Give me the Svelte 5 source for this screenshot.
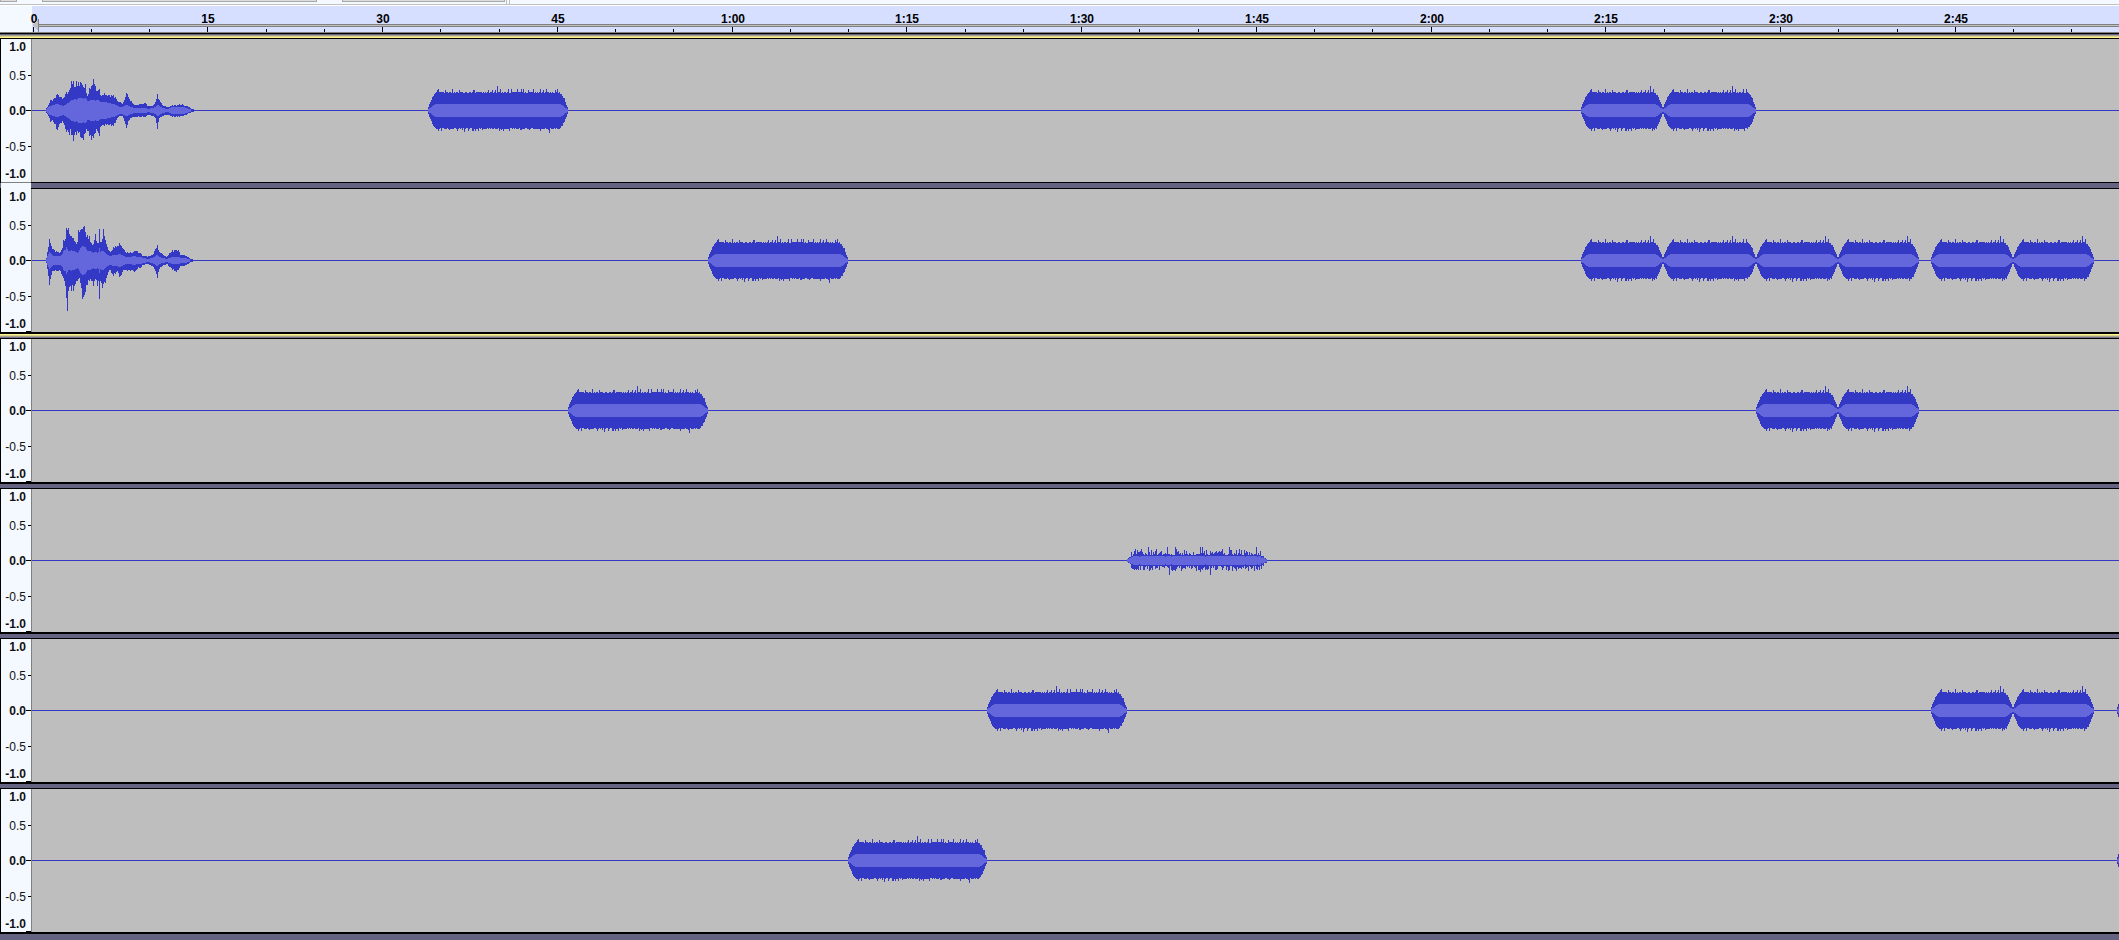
<script>

	// Timeline scale, in pixels per second:
	const ZOOM = 11.65;
	const MIDDLE = 71;

	// Speech envelopes: [x, height above, depth below, rms]
	const speechLeft = [
		[13, 0, 0, 0], [14, 2, 2, 1], [16, 5, 5, 3], [18, 10, 11, 4], [21, 11, 11, 5], [25, 16, 19, 6], [28, 13, 12, 5],
		[31, 12, 12, 4], [34, 18, 21, 6], [37, 20, 24, 8], [38, 22, 18, 9], [39, 29, 24, 10], [41, 29, 30, 10], [42, 23, 24, 11],
		[44, 29, 24, 10], [46, 28, 22, 12], [49, 27, 27, 12], [51, 23, 29, 11], [53, 26, 22, 12], [55, 14, 20, 9],
		[57, 22, 25, 9], [59, 24, 29, 10], [61, 31, 27, 10], [63, 24, 22, 9], [65, 19, 20, 10], [67, 21, 25, 9],
		[68, 15, 16, 8], [72, 17, 15, 8], [76, 15, 14, 7], [81, 15, 15, 6], [83, 13, 12, 5], [85, 9, 7, 4], [88, 8, 5, 3],
		[90, 6, 5, 3], [92, 10, 10, 4], [94, 17, 17, 5], [96, 13, 10, 4], [99, 9, 7, 3], [102, 5, 6, 2], [108, 6, 6, 2],
		[113, 7, 6, 2], [116, 4, 4, 1], [120, 4, 5, 2], [123, 8, 7, 3], [125, 16, 18, 5], [127, 10, 7, 4], [130, 5, 5, 2],
		[135, 3, 4, 1], [140, 5, 6, 3], [145, 5, 6, 3], [150, 6, 5, 3], [154, 4, 4, 2], [157, 3, 2, 1], [160, 1, 1, 0], [164, 0, 0, 0]
	];
	const speechRight = [
		[13, 0, 0, 0], [14, 2, 2, 1], [15, 8, 8, 4], [17, 21, 24, 8], [19, 14, 14, 6], [21, 11, 10, 4], [25, 8, 10, 4],
		[28, 8, 10, 4], [30, 12, 15, 6], [31, 20, 17, 9], [33, 21, 25, 10], [34, 32, 37, 13], [35, 30, 50, 11], [36, 32, 30, 9],
		[38, 24, 25, 9], [39, 24, 30, 10], [40, 22, 24, 9], [41, 22, 30, 9], [43, 18, 23, 8], [45, 18, 20, 7], [46, 30, 18, 8],
		[47, 28, 17, 10], [49, 31, 27, 13], [50, 31, 38, 14], [52, 34, 34, 13], [53, 28, 31, 13], [55, 25, 24, 9],
		[57, 24, 20, 9], [59, 17, 20, 8], [61, 16, 25, 7], [63, 26, 18, 8], [65, 17, 25, 7], [66, 17, 20, 8], [67, 31, 38, 12],
		[68, 18, 20, 8], [70, 21, 27, 9], [71, 31, 23, 9], [73, 20, 22, 7], [75, 13, 14, 5], [77, 9, 9, 4], [79, 9, 12, 4],
		[81, 13, 15, 5], [85, 14, 10, 5], [87, 17, 16, 6], [89, 14, 14, 5], [91, 11, 9, 4], [94, 7, 9, 3], [98, 8, 10, 3],
		[102, 9, 11, 4], [105, 9, 8, 3], [108, 7, 7, 3], [111, 4, 4, 2], [116, 4, 3, 1], [120, 5, 5, 2], [123, 11, 10, 4],
		[125, 15, 17, 5], [127, 8, 8, 3], [130, 6, 5, 2], [134, 3, 3, 1], [137, 7, 6, 2], [140, 10, 9, 3], [144, 10, 11, 3],
		[146, 10, 9, 3], [148, 5, 5, 2], [152, 5, 5, 2], [156, 3, 3, 1], [158, 1, 1, 0], [164, 0, 0, 0]
	];

	// Clips are [start, end] in seconds:
	const groups = [
		{ selected: true, channels: [
			{ speech: speechLeft, clips: [[34, 46], [133, 140], [140, 148]] },
			{ speech: speechRight, clips: [[58, 70], [133, 140], [140, 148], [148, 155], [155, 162], [163, 170], [170, 177]] }
		]},
		{ channels: [{ clips: [[46, 58], [148, 155], [155, 162]] }] },
		{ channels: [{ quiet: true, clips: [[94, 106]] }] },
		{ channels: [{ clips: [[82, 94], [163, 170], [170, 177], [179, 186]] }] },
		{ channels: [{ clips: [[70, 82], [179, 186]] }] }
	];

	const levels = ["1.0", "0.5", "0.0", "-0.5", "-1.0"];
	const seconds = Array.from({ length: 36 }, (_, i) => i * 5);

	function timeLabel(time) {
		if(time < 60) return String(time);
		return Math.floor(time / 60) + ":" + String(time % 60).padStart(2, "0");
	}

	// Repeatable noise between 0 and 1:
	function noise(n) {
		const value = Math.sin(n * 127.1 + 11.7) * 43758.5453;
		return value - Math.floor(value);
	}

	function column(x, up, down) {
		return `M${x} ${MIDDLE - up}h1v${up + down + 1}h-1z`;
	}

	function speechPaths(points) {
		let peak = "", rms = "";
		for(let i = 0; i < points.length - 1; i++) {
			const a = points[i], b = points[i + 1];
			for(let x = a[0]; x < b[0]; x++) {
				const t = (x - a[0]) / (b[0] - a[0]);
				const mix = k => a[k] + (b[k] - a[k]) * t;
				const jitter = t > 0 ? 0.84 + noise(x) * 0.2 : 1;
				peak += column(x, Math.round(mix(1) * jitter), Math.round(mix(2) * jitter));
				if(mix(3) >= 0.5) rms += column(x, Math.round(mix(3)), Math.round(mix(3)));
			}
		}
		return { peak, rms };
	}

	function clipPaths([start, end], quiet) {
		let peak = "", rms = "";
		const from = Math.round(start * ZOOM);
		const width = Math.round(end * ZOOM) - from;
		for(let i = 0; i < width; i++) {
			const edge = Math.min(i, width - 1 - i);
			const fade = Math.min(1, (edge + 1) / 10);
			const slope = Math.sin(fade * Math.PI / 2);
			let up, down, inner;
			if(quiet) {
				up = 5 + Math.pow(noise(i), 2) * 6;
				down = 5 + Math.pow(noise(i + 500), 2) * 6;
				inner = noise(i + 900) > 0.93 ? 3 : 4;
				if(i % 27 === 21 || i === 73 || i === 40) up = 13;
				if(i === 42 || i === 83) down = 14;
			} else {
				up = 17 + Math.round(noise(i) * 1.4) + (noise(i + 300) > 0.86 ? 3 : 0);
				down = 17 + Math.round(noise(i + 500) * 1.6) + (noise(i + 800) > 0.86 ? 2 : 0);
				inner = 6;
				if(i === 69) up = 24;
				if(i === 36) down = 21;
				if(i === 121) down = 22;
			}
			const innerSlope = Math.min(1, (edge + 1) / 8);
			peak += column(from + i, Math.max(1, Math.round(up * slope)), Math.max(1, Math.round(down * slope)));
			rms += column(from + i, Math.round(inner * innerSlope), Math.round(inner * innerSlope));
		}
		return { peak, rms };
	}

	function waveforms(channel) {
		const waves = channel.clips.map(clip => clipPaths(clip, channel.quiet));
		return channel.speech ? [speechPaths(channel.speech), ...waves] : waves;
	}

</script>

<!-- #################################################################################################### -->

<main>

	<!-- Bottom Edge of the Toolbars -->
	<div class="toolbars">
		<span class="tool first"></span>
		<span class="tool second"></span>
		<span class="tool third"></span>
		<span class="grip"></span>
	</div>

	<!-- Time Ruler -->
	<svg class="ruler" shape-rendering="crispEdges">
		<rect class="corner" width="32" height="26" />
		<rect class="rail" x="34" y="18" width="100%" height="3" />
		<rect class="groove" x="34" y="19" width="100%" height="1" />
		{#each seconds as time}
			{@const x = 33 + Math.floor(time * ZOOM)}
			{#if time % 15 === 0}
				<rect {x} y="21" width="1" height="5" />
				<text x={x + 1} y="17">{timeLabel(time)}</text>
			{:else}
				<rect {x} y="23" width="1" height="3" />
			{/if}
		{/each}
		<path class="playhead" d="M38 13v12l-5-6z" />
		<path class="playhead-edge" d="M38 13h1v13h-1z" />
	</svg>
	<div class="shadow"></div>

	<!-- Tracks -->
	{#each groups as group}
		<section class:selected={group.selected}>
			{#each group.channels as channel}
				<div class="track">
					<ul>
						{#each levels as level, i}
							<li class:bold={i % 2 === 0}>
								<span>{level}</span>
								<i></i>
							</li>
						{/each}
					</ul>
					<svg class="wave" shape-rendering="crispEdges">
						<rect class="peak" y={MIDDLE} width="100%" height="1" />
						{#each waveforms(channel) as wave}
							<path class="peak" d={wave.peak} />
							<path class="rms" d={wave.rms} />
						{/each}
					</svg>
				</div>
			{/each}
		</section>
	{/each}
</main>

<!-- #################################################################################################### -->

<style>

	:global(body) {
		margin: 0;
		background-color: #646482;
	}

	main {
		min-height: 100vh;
		overflow: hidden;
		font: 12px/12px "Liberation Sans", Arial, sans-serif;
		color: #111;
		background-color: #646482;
	}

	.toolbars {
		display: flex;
		box-sizing: border-box;
		height: 6px;
		padding-bottom: 2px;
		background: linear-gradient(#f4f8ff 4px, #c0c0c0 4px, #c0c0c0 5px, #fff 5px);
	}

	.tool {
		box-sizing: border-box;
		height: 2px;
		border: 1px solid #a8a8a8;
		border-top: 0;
		background-color: #ddd;
	}

	.first {
		width: 17px;
		margin-right: 25px;
	}

	.second {
		width: 275px;
		margin-right: 25px;
	}

	.third {
		width: 163px;
		margin-right: 1px;
	}

	.grip {
		width: 2px;
		height: 4px;
		border: 1px solid #c0c0c0;
		border-width: 0 1px;
	}

	svg {
		display: block;
		width: 100%;
	}

	.ruler {
		height: 26px;
		background-color: #d6dfff;
	}

	.ruler text {
		font-weight: bold;
		text-anchor: middle;
	}

	.corner {
		fill: #f4f8ff;
	}

	.rail {
		fill: #808080;
	}

	.groove,
	.playhead {
		fill: #c0c0c0;
	}

	.playhead-edge {
		fill: #808080;
	}

	.shadow {
		height: 3px;
		background: linear-gradient(#808080 1px, #000 1px, #000 2px, #646482 2px);
	}

	section {
		padding-bottom: 4px;
	}

	section.selected {
		padding: 3px 0 4px;
		background:
			linear-gradient(#a8a48c 1px, #d8d28c 1px, #d8d28c 2px, #fff48c 2px) top / 100% 3px no-repeat,
			linear-gradient(#fff48c 1px, #d8d28c 1px, #d8d28c 2px, #a8a48c 2px, #a8a48c 3px, #77748a 3px) bottom / 100% 4px no-repeat;
	}

	.track {
		display: grid;
		grid-template-columns: 32px 1fr;
		height: 143px;
		border-top: 1px solid #000;
		border-bottom: 2px solid #000;
		background-color: #bebebe;
	}

	.selected .track:first-child {
		margin-bottom: 5px;
		border-bottom-width: 1px;
		box-shadow: 0 5px #646482;
	}

	ul {
		display: grid;
		grid-template-rows: 16px 41px 29px 43px 11px;
		position: relative;
		box-sizing: border-box;
		height: 143px;
		margin: 0;
		padding: 0;
		list-style: none;
		border-left: 1px solid #000;
		border-right: 1px solid #808080;
		background-color: #f4f8ff;
	}

	/* The two channels of a stereo track share one scale column */
	.selected .track:first-child ul::after {
		content: "";
		position: absolute;
		top: 143px;
		left: 0;
		width: 30px;
		height: 6px;
		border-top: 1px solid #808080;
		background-color: #f4f8ff;
	}

	li {
		display: flex;
		align-items: center;
		justify-content: flex-end;
	}

	li span {
		margin-right: 2px;
	}

	li i {
		width: 3px;
		height: 1px;
		background-color: #000;
	}

	.bold {
		font-weight: bold;
	}

	.bold span {
		margin-right: 0;
	}

	.bold i {
		width: 5px;
	}

	li:first-child i {
		background: none;
	}

	li:last-child i {
		align-self: flex-end;
		margin-bottom: -3px;
	}

	.selected .track:first-child li:last-child i {
		background: none;
	}

	.wave {
		height: 143px;
	}

	.peak {
		fill: #3339c5;
	}

	.rms {
		fill: #6466dc;
	}

</style>
